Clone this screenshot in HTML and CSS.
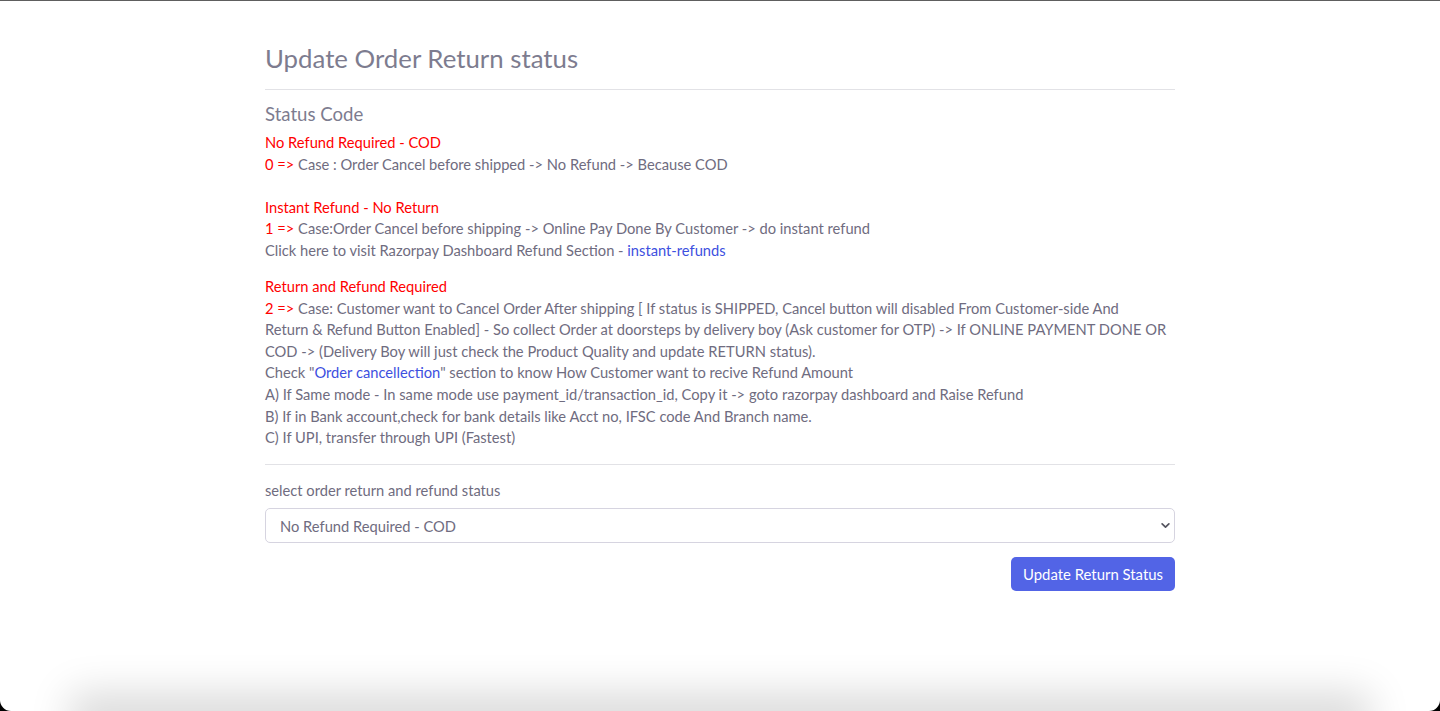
FILE: index.html
```html
<!DOCTYPE html>
<html lang="en">
<head>
<meta charset="utf-8">
<title>Update Order Return status</title>
<link rel="stylesheet" href="styles.css">
</head>
<body>
<div class="window">
  <main class="page">
    <h1 class="title">Update Order Return status</h1>
    <hr class="sep sep-top">
    <h2 class="subtitle">Status Code</h2>

    <div class="block block-1">
      <div class="red">No Refund Required - COD</div>
      <div><span class="red">0 =&gt;</span> Case : Order Cancel before shipped -&gt; No Refund -&gt; Because COD</div>
    </div>

    <div class="block block-2">
      <div class="red">Instant Refund - No Return</div>
      <div><span class="red">1 =&gt;</span> Case:Order Cancel before shipping -&gt; Online Pay Done By Customer -&gt; do instant refund</div>
      <div>Click here to visit Razorpay Dashboard Refund Section - <a class="link" href="#">instant-refunds</a></div>
    </div>

    <div class="block block-3">
      <div class="red">Return and Refund Required</div>
      <div><span class="red">2 =&gt;</span> Case: Customer want to Cancel Order After shipping [ If status is SHIPPED, Cancel button will disabled From Customer-side And<br>Return &amp; Refund Button Enabled] - So collect Order at doorsteps by delivery boy (Ask customer for OTP) -&gt; If ONLINE PAYMENT DONE OR COD -&gt; (Delivery Boy will just check the Product Quality and update RETURN status).</div>
      <div>Check "<a class="link" href="#">Order cancellection</a>" section to know How Customer want to recive Refund Amount</div>
      <div>A) If Same mode - In same mode use payment_id/transaction_id, Copy it -&gt; goto razorpay dashboard and Raise Refund</div>
      <div>B) If in Bank account,check for bank details like Acct no, IFSC code And Branch name.</div>
      <div>C) If UPI, transfer through UPI (Fastest)</div>
    </div>

    <hr class="sep sep-bottom">

    <form class="form">
      <label class="label" for="status">select order return and refund status</label>
      <div class="select-wrap">
        <select id="status" class="select">
          <option>No Refund Required - COD</option>
          <option>Instant Refund - No Return</option>
          <option>Return and Refund Required</option>
        </select>
        <svg class="chevron" width="9" height="9" viewBox="0 0 16 16"><path d="M2 5l6 6 6-6" fill="none" stroke="#55555f" stroke-width="3" stroke-linecap="round" stroke-linejoin="round"/></svg>
      </div>
      <div class="actions">
        <button type="button" class="btn">Update Return Status</button>
      </div>
    </form>
  </main>
  <div class="bottom-shadow"></div>
</div>
</body>
</html>
```

FILE: styles.css
```css
html {
  background: #000;
}
body {
  margin: 0;
  font-family: "Lato", "Noto Sans", sans-serif;
  color: #6f6c80;
  font-size: 14.7px;
  line-height: 21.6px;
}
.window {
  position: relative;
  height: 711px;
  box-sizing: border-box;
  background: #fff;
  border-top: 1px solid #5e5e5e;
  border-radius: 0 0 11px 11px;
  overflow: hidden;
}
.page {
  width: 910px;
  margin: 0 auto;
  padding-top: 42px;
}
.title {
  margin: 0;
  font-size: 25.8px;
  line-height: 30px;
  font-weight: 400;
  color: #7d7c8f;
}
.sep {
  border: 0;
  border-top: 1px solid #e2e2e6;
  margin: 0;
}
.sep-top {
  margin-top: 16px;
}
.subtitle {
  margin: 13px 0 7px;
  font-size: 18.6px;
  line-height: 22px;
  font-weight: 400;
  color: #7d7c8f;
}
.block-1 {
  margin-bottom: 21.6px;
}
.block-2 {
  margin-bottom: 14.4px;
}
.red {
  color: #ff0000;
}
.link {
  color: #3d50e0;
  text-decoration: none;
}
.sep-bottom {
  margin-top: 15px;
}
.form {
  padding-top: 15px;
}
.label {
  display: block;
  margin-bottom: 7px;
}
.select-wrap {
  position: relative;
}
.select {
  display: block;
  width: 100%;
  height: 35px;
  box-sizing: border-box;
  appearance: none;
  -webkit-appearance: none;
  background: #fff;
  border: 1px solid #d6d4e0;
  border-radius: 5px;
  padding: 0 14px;
  font-family: inherit;
  font-size: 14.7px;
  color: #6f6c80;
}
.chevron {
  position: absolute;
  right: 5px;
  top: 13px;
}
.actions {
  display: flex;
  justify-content: flex-end;
  margin-top: 14px;
}
.btn {
  width: 164px;
  height: 34px;
  border: 0;
  border-radius: 5px;
  background: #5264e6;
  color: #fff;
  font-family: inherit;
  font-size: 14.9px;
  cursor: pointer;
}
.bottom-shadow {
  position: absolute;
  left: 80px;
  right: 80px;
  top: 100%;
  height: 30px;
  box-shadow: 0 -8px 40px 10px rgba(0, 0, 0, 0.15);
}
```
